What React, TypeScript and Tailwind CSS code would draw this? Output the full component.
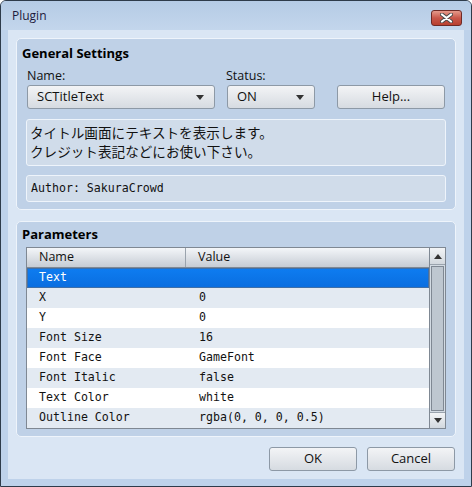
import React from "react";

const UI = { fontFamily: '"Open Sans", "Noto Sans", sans-serif' };
const MONO = { fontFamily: '"DejaVu Sans Mono", "Noto Sans CJK JP", monospace' };
const JP = { fontFamily: '"Noto Sans CJK JP", sans-serif' };

function Arrow() {
  return (
    <svg width="8" height="5" viewBox="0 0 8 5">
      <path d="M0 0 L8 0 L4 5 Z" fill="#333" />
    </svg>
  );
}

function Dropdown({ label, w }: { label: string; w: string }) {
  return (
    <div
      className={`${w} h-[24px] flex items-center justify-between pl-[9px] pr-[10px] rounded-[3px] border border-[#8d99a6] bg-gradient-to-b from-[#f3f4f6] to-[#d6dbe1] text-[13px] text-[#111]`}
      style={UI}
    >
      <span>{label}</span>
      <Arrow />
    </div>
  );
}

function Button({ label, w }: { label: string; w: string }) {
  return (
    <div
      className={`${w} h-[24px] flex items-center justify-center rounded-[3px] border border-[#8d99a6] bg-gradient-to-b from-[#f3f4f6] to-[#d6dbe1] text-[13px] text-[#111]`}
      style={UI}
    >
      {label}
    </div>
  );
}

const rows: [string, string][] = [
  ["X", "0"],
  ["Y", "0"],
  ["Font Size", "16"],
  ["Font Face", "GameFont"],
  ["Font Italic", "false"],
  ["Text Color", "white"],
  ["Outline Color", "rgba(0, 0, 0, 0.5)"],
];

export default function App() {
  return (
    <div className="w-[472px] h-[487px] bg-[#bed2ea] border border-[#2e3b4a] flex flex-col rounded-t-[6px] overflow-hidden">
      {/* Title bar */}
      <div className="h-[29px] flex items-center justify-between pl-[11px] pr-[9px] bg-gradient-to-b from-[#b5cbe5] to-[#c3d6ec]">
        <span className="text-[12px] text-[#1d1a3d]" style={UI}>Plugin</span>
        <div className="w-[31px] h-[16px] mt-[5px] rounded-[3px] border border-[#6e2a26] bg-gradient-to-b from-[#e59a8c] via-[#c9574a] to-[#b8402f] flex items-center justify-center">
          <svg width="13" height="10" viewBox="0 0 13 10">
            <path d="M2 1.5 L11 8.5 M11 1.5 L2 8.5" stroke="#4a4a4a" strokeWidth="4" strokeLinecap="round" />
            <path d="M2 1.5 L11 8.5 M11 1.5 L2 8.5" stroke="#ffffff" strokeWidth="2.2" strokeLinecap="round" />
          </svg>
        </div>
      </div>
      {/* Client */}
      <div className="mx-[7px] h-[449px] bg-[#dae6f4] flex flex-col pt-[8px] pl-[8px] pr-[8px]">
        {/* General Settings */}
        <div className="h-[172px] rounded-[5px] border border-[#eef4fb] bg-[#bfd1e7] flex flex-col">
          <div className="h-[28px] pt-[5px] pl-[5px] text-[13px] font-bold text-black" style={UI}>General Settings</div>
          <div className="flex flex-col px-[9px]">
            <div className="flex h-[17px] text-[12.5px] text-[#111]" style={UI}>
              <span className="w-[200px] pl-[1px]">Name:</span>
              <span>Status:</span>
            </div>
            <div className="flex items-center mt-[1px] h-[24px] pl-[1px]">
              <Dropdown label="SCTitleText" w="w-[188px]" />
              <div className="w-[12px]" />
              <Dropdown label="ON" w="w-[88px]" />
              <div className="w-[22px]" />
              <Button label="Help..." w="w-[108px]" />
            </div>
            <div className="mt-[10px] h-[47px] rounded-[3px] border border-[#eef4fb] bg-[#d0dcea] pl-[3px] pt-[3px] text-[13.6px] leading-[19px] text-[#111]" style={JP}>
              <div>タイトル画面にテキストを表示します。</div>
              <div>クレジット表記などにお使い下さい。</div>
            </div>
            <div className="mt-[9px] h-[27px] rounded-[3px] border border-[#eef4fb] bg-[#d0dcea] pl-[4px] flex items-center text-[11.6px] text-[#111]" style={MONO}>
              Author: SakuraCrowd
            </div>
          </div>
        </div>
        {/* Parameters */}
        <div className="mt-[11px] h-[216px] rounded-[5px] border border-[#eef4fb] bg-[#bfd1e7] flex flex-col">
          <div className="h-[25px] pt-[3px] pl-[5px] text-[13px] font-bold text-black" style={UI}>Parameters</div>
          <div className="mx-[9px] h-[182px] flex border border-[#7f8893] bg-white">
            <div className="flex-1 flex flex-col">
              <div className="h-[20px] flex border-b border-[#7f8893] bg-gradient-to-b from-[#f4f6f9] to-[#c6ccd4] text-[12.5px] text-[#111]" style={UI}>
                <div className="w-[159px] pl-[12px] border-r border-[#9aa3ad] flex items-center">Name</div>
                <div className="pl-[12px] flex items-center">Value</div>
              </div>
              <div className="h-[20px] flex items-center bg-gradient-to-b from-[#0e7cf0] to-[#0a6ee0] border border-[#3f6fa8] text-white text-[11.6px]" style={MONO}>
                <span className="pl-[11px]">Text</span>
              </div>
              {rows.map(([n, v], i) => (
                <div
                  key={n}
                  className={`h-[20px] flex items-center text-[11.6px] text-[#111] ${i % 2 === 0 ? "bg-[#e3eaf2]" : "bg-white"}`}
                  style={MONO}
                >
                  <span className="w-[172px] pl-[12px]">{n}</span>
                  <span>{v}</span>
                </div>
              ))}
            </div>
            <div className="w-[16px] flex flex-col bg-[#d3dbe3] border-l border-[#7f8893]">
              <div className="h-[17px] flex items-center justify-center bg-gradient-to-b from-[#f2f4f6] to-[#d2d8de] border-b border-[#9aa3ad]">
                <svg width="8" height="5" viewBox="0 0 8 5"><path d="M0 5 L8 5 L4 0 Z" fill="#333" /></svg>
              </div>
              <div className="flex-1 mx-[1px] my-[1px] border border-[#7f8893] bg-[#bec7d0]" />
              <div className="h-[16px] flex items-center justify-center bg-gradient-to-b from-[#f2f4f6] to-[#d2d8de] border-t border-[#9aa3ad]">
                <Arrow />
              </div>
            </div>
          </div>
        </div>
        {/* Buttons */}
        <div className="mt-[10px] flex justify-end gap-[10px] pr-[1px]">
          <Button label="OK" w="w-[88px]" />
          <Button label="Cancel" w="w-[88px]" />
        </div>
      </div>
    </div>
  );
}
